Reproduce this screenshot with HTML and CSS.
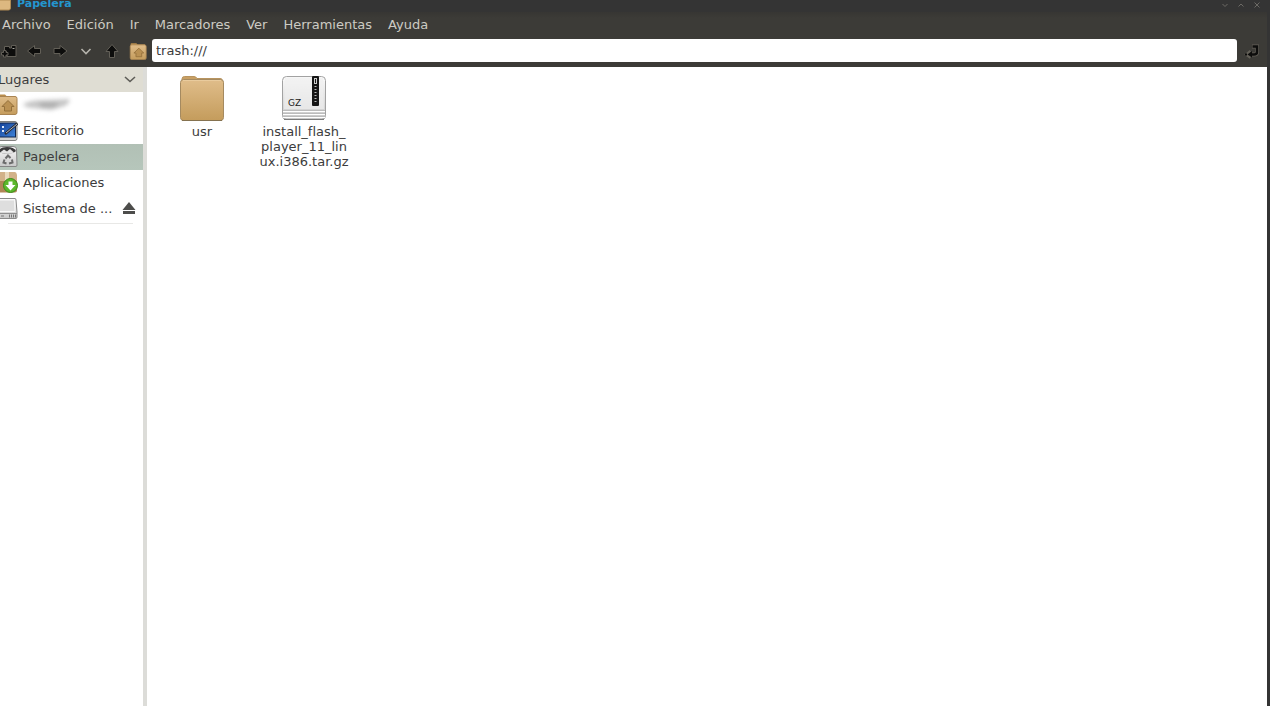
FILE: index.html
```
<!DOCTYPE html>
<html lang="es">
<head>
  <meta charset="UTF-8" />
  <title>Papelera</title>
  <link rel="stylesheet" href="styles.css">
</head>
<body>

  <svg class="defs" width="0" height="0" aria-hidden="true">
    <defs>
      <linearGradient id="tan" x1="0" y1="0" x2="0" y2="1">
        <stop offset="0" stop-color="#e0bd8a" />
        <stop offset="1" stop-color="#c49c5c" />
      </linearGradient>
      <linearGradient id="metal" x1="0" y1="0" x2="0" y2="1">
        <stop offset="0" stop-color="#fbfbfb" />
        <stop offset="1" stop-color="#c8c8c8" />
      </linearGradient>
      <linearGradient id="screen" x1="0" y1="0" x2="1" y2="1">
        <stop offset="0" stop-color="#123f96" />
        <stop offset="1" stop-color="#3f83d8" />
      </linearGradient>
      <symbol id="home" viewBox="0 0 22 22">
        <path d="M2 5V2.500Q2 1.500 3 1.500H9L10.500 3H19.500V8H2z" fill="#b98d4c" />
        <rect x="1.500" y="3.500" width="19.500" height="18" rx="2" fill="url(#tan)" stroke="#a98452" />
        <path d="M12 7.500L6 13.500H8.500V18H15.500V13.500H18z" fill="#ba9153" stroke="#94703b" />
      </symbol>
    </defs>
  </svg>

  <header class="titlebar">
    <svg class="title-icon" width="16" height="12" viewBox="0 0 16 12">
      <path d="M0 0H14.500V8Q14.500 10 12.500 10H0z" fill="#ddb880" stroke="#b08a52" />
    </svg>
    <h1>Papelera</h1>
    <div class="window-buttons">
      <button aria-label="Minimizar"><svg width="8" height="8" viewBox="0 0 8 8"><path d="M1.500 3L4 5.500L6.500 3" /></svg></button>
      <button aria-label="Maximizar"><svg width="8" height="8" viewBox="0 0 8 8"><path d="M1.500 5.500L4 3L6.500 5.500" /></svg></button>
      <button aria-label="Cerrar"><svg width="8" height="8" viewBox="0 0 8 8"><path d="M1.500 1.500L6.500 6.500M6.500 1.500L1.500 6.500" /></svg></button>
    </div>
  </header>

  <nav class="menubar">
    <button>Archivo</button>
    <button>Edición</button>
    <button>Ir</button>
    <button>Marcadores</button>
    <button>Ver</button>
    <button>Herramientas</button>
    <button>Ayuda</button>
  </nav>

  <div class="toolbar">
    <button aria-label="Pestaña nueva">
      <svg class="dark" width="18" height="16" viewBox="0 0 18 16">
        <path d="M5.500 7V3.500H10.500V5H12.500V2.500H17V13.500H8V9z" />
        <path d="M4.500 7.500H7V9.500H9V12H7V14H4.500V12H2.500V9.500H4.500z" />
        <path class="shine" d="M13.500 5.500H15.500" />
      </svg>
    </button>
    <button aria-label="Atrás">
      <svg class="dark" width="16" height="16" viewBox="0 0 16 16"><path d="M1.500 8L8.500 2.500V5.500H14.500V10.500H8.500V13.500z" /></svg>
    </button>
    <button aria-label="Adelante">
      <svg class="dark" width="16" height="16" viewBox="0 0 16 16"><path d="M15 8L8 2.500V5.500H2V10.500H8V13.500z" /></svg>
    </button>
    <button aria-label="Historial">
      <svg width="16" height="16" viewBox="0 0 16 16"><path d="M3.500 6L8 10.500L12.500 6" fill="none" stroke="#b5b3ac" stroke-width="1.600" /></svg>
    </button>
    <button aria-label="Subir">
      <svg class="dark" width="16" height="16" viewBox="0 0 16 16"><path d="M8 1.500L14 8.500H10.500V14.500H5.500V8.500H2z" /></svg>
    </button>
    <button aria-label="Carpeta personal">
      <svg width="18" height="18"><use href="#home" /></svg>
    </button>
    <input type="text" aria-label="Ruta" value="trash:///" />
    <button class="go" aria-label="Ir a la ruta">
      <svg width="18" height="16" viewBox="0 0 18 16">
        <path d="M8 3.500H13V9Q13 11.500 10 11.500H3M7 8.500L3.500 11.500L7 14" fill="none" stroke="#625f57" stroke-width="4" />
        <path d="M8.500 3.500H13V9Q13 11.500 10 11.500H6" fill="none" stroke="#0d0d0c" stroke-width="2.500" />
        <path d="M8 8L3.500 11.500L8 14.500z" fill="#0d0d0c" />
        <path d="M1 11.500H3" stroke="#0d0d0c" stroke-width="2" />
      </svg>
    </button>
  </div>

  <div class="content">
    <aside class="sidebar">
      <button class="places-header">
        <span>Lugares</span>
        <svg width="16" height="16" viewBox="0 0 16 16"><path d="M3 5L8 9.500L13 5" fill="none" stroke="#5e5d58" stroke-width="1.600" /></svg>
      </button>

      <ul class="places">
        <li>
          <a href="#">
            <svg width="22" height="22"><use href="#home" /></svg>
            <svg class="smudge" width="50" height="18" viewBox="0 0 50 18" role="img" aria-label="Usuario">
              <path d="M0 9Q8 5 20 5L46 4Q48 7 42 11L28 15L10 13Q2 13 0 9z" fill="#c6c6c6" />
              <path d="M16 8H36L32 12H18z" fill="#ababab" />
            </svg>
          </a>
        </li>
        <li>
          <a href="#">
            <svg width="22" height="22" viewBox="0 0 22 22">
              <rect x="0.500" y="2.500" width="20.500" height="19" rx="2" fill="#d2d2d0" stroke="#80807e" />
              <rect x="2" y="4" width="17.500" height="14" fill="url(#screen)" stroke="#10264f" />
              <path d="M6 7H8V9H6zM6 11H8V13H6z" fill="#dfe9fa" />
              <path d="M9 15L21.500 4.500" stroke="#2c2c30" stroke-width="2.500" />
              <path d="M10 14L21 5" stroke="#a9b5c8" />
            </svg>
            <span>Escritorio</span>
          </a>
        </li>
        <li class="selected">
          <a href="#">
            <svg width="22" height="22" viewBox="0 0 22 22">
              <path d="M2.500 4Q3 1.500 6 1.500H17Q20.500 1.500 20.500 4L21 20Q21 21.500 20 21.500H2z" fill="url(#metal)" stroke="#858585" />
              <path d="M3 6Q4 2 11 2T20 6Q18 8.500 11 8.500T3 6z" fill="#3c3c3c" />
              <path d="M4 7.500L8 4.500L11 6.500L14 4L18 7.500Q11 10 4 7.500z" fill="#e4e4e4" />
              <path d="M9.500 13.500L12 10.500L14.500 13M16 14.500L16.500 17.500L13 18.500M10.500 18.500L7.500 17.500L8.500 14.500" fill="none" stroke="#6b6b6b" stroke-width="2" />
            </svg>
            <span>Papelera</span>
          </a>
        </li>
        <li>
          <a href="#">
            <svg width="22" height="22" viewBox="0 0 22 22">
              <path d="M1 2.500Q1 1 3 1H19Q20.500 1 21 4V10H1z" fill="#d2b189" />
              <path d="M1 10H21V19.500Q21 21.500 19 21.500H1z" fill="#b08657" />
              <path d="M9 1H13V12H9z" fill="#ead9bd" />
              <circle cx="14.500" cy="14.500" r="7" fill="#5cb82b" stroke="#3d8a1b" />
              <path d="M12.500 10.500H16.500V14H19.500L14.500 19.500L9.500 14H12.500z" fill="#fff" />
            </svg>
            <span>Aplicaciones</span>
          </a>
        </li>
        <li>
          <a href="#">
            <svg width="22" height="22" viewBox="0 0 22 22">
              <path d="M2 1.500H19Q20 1.500 20 3L21 15V20Q21 21.500 20 21.500H1V15z" fill="url(#metal)" stroke="#8a8a8a" />
              <path d="M3 3H18.500L19 14.500H3z" fill="#dedede" stroke="#f8f8f8" />
              <path d="M1 16.500H21" stroke="#8f8f8f" />
              <path d="M5 19H8M13.500 17.500V20.500M15.500 17.500V20.500M17.500 17.500V20.500M19.500 17.500V20.500" stroke="#777" />
            </svg>
            <span>Sistema de ...</span>
          </a>
          <button class="eject" aria-label="Expulsar">
            <svg width="14" height="16" viewBox="0 0 14 16"><path d="M7 2L13.500 10H0.500zM1 11H13V14H1z" fill="#4d4d4b" /></svg>
          </button>
        </li>
      </ul>
      <hr>
    </aside>

    <div class="splitter"></div>

    <main class="files">
      <figure>
        <svg width="48" height="48" viewBox="0 0 48 48">
          <path d="M4 8V4Q4 1.500 6.500 1.500H16Q18 1.500 19 3.500H42Q45 3.500 45 8z" fill="#c89f63" stroke="#b8945f" />
          <rect x="2.500" y="4.500" width="43" height="41" rx="3" fill="url(#tan)" stroke="#a58a60" />
          <path d="M5 5.500H43" stroke="#e9cb9d" />
          <path d="M4 45.500H44" stroke="#857250" />
        </svg>
        <figcaption>usr</figcaption>
      </figure>
      <figure>
        <svg width="48" height="48" viewBox="0 0 48 48">
          <rect x="2.500" y="1.500" width="43" height="43" rx="4" fill="url(#metal)" stroke="#a2a2a2" />
          <path d="M5 2.500H43L44 34H4z" fill="#f0f0f0" opacity="0.700" />
          <path d="M3 35.500H45M3 38.500H45M3 41.500H45" stroke="#bcbcbc" />
          <path d="M3 36.500H45M3 39.500H45M3 42.500H45" stroke="#fff" />
          <path d="M4 44.500H44" stroke="#7c7c7c" />
          <rect x="32" y="1" width="7" height="30" rx="1" fill="#151515" />
          <path d="M35.500 11V29" stroke="#bbb" stroke-width="2" stroke-dasharray="1 2" />
          <rect x="34.500" y="3.500" width="2" height="5" fill="none" stroke="#ccc" />
          <text x="8" y="31">GZ</text>
        </svg>
        <figcaption>install_flash_player_11_linux.i386.tar.gz</figcaption>
      </figure>
    </main>
  </div>

</body>
</html>
```
FILE: styles.css
```
* {
  box-sizing: border-box;
}

body {
  display: flex;
  flex-direction: column;
  min-height: 100vh;
  margin: 0;
  border-right: 3px solid #343434;
  overflow: hidden;
  background: #3c3b37;
  color: #3c3c3c;
  font-family: "DejaVu Sans", sans-serif;
  font-size: 13px;
  line-height: 15px;
}

button {
  padding: 0;
  border: none;
  background: none;
  color: inherit;
  font: inherit;
}

svg {
  display: block;
  flex-shrink: 0;
}

.defs {
  position: absolute;
}

/* title bar, menus and toolbar */
.titlebar {
  display: flex;
  align-items: flex-end;
  height: 12px;
  padding-right: 6px;
  background: #343434;
}

.title-icon {
  margin-left: -4px;
}

.titlebar h1 {
  margin: 0 0 1px 5px;
  color: #2496cf;
  font-size: 11px;
  line-height: 14px;
}

.window-buttons {
  display: flex;
  gap: 8px;
  margin: 0 0 3px auto;
}

.window-buttons path {
  fill: none;
  stroke: #6c6a65;
}

.menubar {
  display: flex;
  gap: 16px;
  height: 25px;
  padding: 0 2px;
  background: linear-gradient(#373633, #3c3b37 6px);
  color: #cdcbc4;
}

.toolbar {
  display: flex;
  align-items: center;
  height: 30px;
  padding-bottom: 3px;
}

.toolbar button {
  display: flex;
  align-items: center;
  justify-content: center;
  width: 26px;
  height: 26px;
}

.toolbar button:first-child {
  margin-left: -5px;
}

.toolbar input {
  flex: 1;
  min-width: 0;
  height: 23px;
  margin: 0 2px 0 1px;
  padding: 0 4px 1px;
  border: none;
  border-radius: 3px;
  background: #fff;
  color: #3c3c3c;
  font: inherit;
}

.toolbar .go {
  width: 28px;
}

.dark path {
  fill: #0d0d0c;
  stroke: #625f57;
}

.dark .shine {
  stroke: #aaa89f;
}

/* places */
.content {
  display: flex;
  flex: 1;
  background: #fff;
}

.sidebar {
  width: 143px;
  overflow: hidden;
}

.places-header {
  display: flex;
  align-items: center;
  justify-content: space-between;
  width: 100%;
  height: 25px;
  padding-right: 5px;
  background: #dfddd3;
}

.places-header span {
  margin-left: -2px;
}

.places {
  margin: 0;
  padding: 0;
  list-style: none;
}

.places li {
  display: flex;
  align-items: center;
  justify-content: space-between;
  height: 26px;
  padding: 0 7px 2px 0;
}

.places a {
  display: flex;
  align-items: center;
  gap: 5px;
  margin-left: -4px;
  color: inherit;
  text-decoration: none;
}

.places .selected {
  background: linear-gradient(#b1c0b5, #b6c6bb);
}

.smudge {
  filter: blur(2px);
}

.sidebar hr {
  margin: 1px 10px 0 8px;
  border: none;
  border-top: 1px solid #e8e8e6;
}

.splitter {
  width: 4px;
  background: #dcdcd8;
}

/* icon view */
.files {
  display: flex;
  flex: 1;
  flex-wrap: wrap;
  align-content: flex-start;
  gap: 12px;
  padding: 8px 10px;
}

.files figure {
  display: flex;
  flex-direction: column;
  align-items: center;
  gap: 1px;
  width: 90px;
  margin: 0;
}

.files figcaption {
  text-align: center;
  word-break: break-all;
}

.files text {
  fill: #222;
  font-size: 9px;
}
```
